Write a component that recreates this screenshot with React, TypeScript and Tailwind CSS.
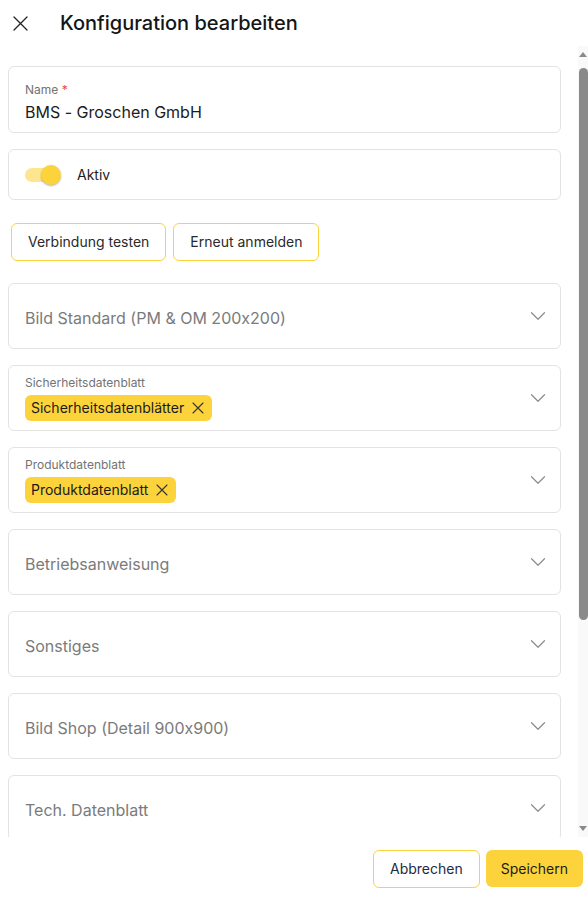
import { ChevronDown } from "lucide-react";

const yellow = "bg-[#fdd33b]";

type Field = {
  label: string;
  chips?: string[];
};

const fields: Field[] = [
  { label: "Bild Standard (PM & OM 200x200)" },
  { label: "Sicherheitsdatenblatt", chips: ["Sicherheitsdatenblätter"] },
  { label: "Produktdatenblatt", chips: ["Produktdatenblatt"] },
  { label: "Betriebsanweisung" },
  { label: "Sonstiges" },
  { label: "Bild Shop (Detail 900x900)" },
  { label: "Tech. Datenblatt" },
  { label: "Zertifikate" },
  { label: "Bild Shop (Liste 300x300)" },
  { label: "Videos" },
];

function Cross({ size, stroke = 1.4 }: { size: number; stroke?: number }) {
  return (
    <svg width={size} height={size} viewBox={`0 0 ${size} ${size}`} fill="none" stroke="currentColor" strokeWidth={stroke} strokeLinecap="round">
      <path d={`M1 1L${size - 1} ${size - 1}M${size - 1} 1L1 ${size - 1}`} />
    </svg>
  );
}

function SelectField({ field }: { field: Field }) {
  const hasValue = field.chips && field.chips.length > 0;
  return (
    <div className="flex h-[66px] items-center rounded-md border border-[#e3e3e3] bg-white pl-4 pr-[9px]">
      <div className="flex-1">
        {hasValue ? (
          <div>
            <p className="text-xs leading-4 text-[#737373]">{field.label}</p>
            <div className="mt-1 flex gap-1">
              {field.chips!.map((c) => (
                <span
                  key={c}
                  className={`flex h-[26px] items-center gap-2 rounded-md ${yellow} pl-1.5 pr-2 text-sm text-[#1b1b1b]`}
                >
                  {c}
                  <span className="text-[#333]">
                    <Cross size={12} stroke={1.1} />
                  </span>
                </span>
              ))}
            </div>
          </div>
        ) : (
          <p className="pt-1 text-base text-[#7b7b7b]">{field.label}</p>
        )}
      </div>
      <ChevronDown size={26} strokeWidth={1.1} className="text-[#8c8c8c]" />
    </div>
  );
}

// page-level scrollbar track with arrows and thumb
function ScrollTrack() {
  return (
    <div className="flex w-[10px] shrink-0 flex-col items-center bg-[#f9f9f9] pb-[6px] pt-[6px]">
      <div className="h-0 w-0 border-x-[4px] border-b-[5px] border-x-transparent border-b-[#8a8a8a]" />
      <div className="ml-px mt-[11px] h-[552px] w-[9px] rounded-t-full rounded-b-full bg-[#8a8a8a]" />
      <div className="flex-1" />
      <div className="h-0 w-0 border-x-[4px] border-t-[5px] border-x-transparent border-t-[#8a8a8a]" />
    </div>
  );
}

export default function App() {
  return (
    <div
      className="flex h-[897px] w-[588px] flex-col bg-white text-[#1c1c1c] [font-feature-settings:'calt'_0]"
      style={{ fontFamily: "Inter, 'Noto Sans', sans-serif" }}
    >
      {/* header */}
      <div className="flex h-[46px] shrink-0 items-center gap-[32px] pl-[13px]">
        <span className="text-[#222]">
          <Cross size={15} stroke={1.3} />
        </span>
        <h1 className="text-xl font-medium text-[#151515]">Konfiguration bearbeiten</h1>
      </div>

      <div className="flex min-h-0 flex-1">
        {/* scrollable form */}
        <div className="min-h-0 flex-1 overflow-y-auto pl-2 pr-[17px] pt-5 pb-4 [scrollbar-width:none]">
          <div className="flex flex-col gap-4">
            <div className="flex h-[67px] flex-col justify-center rounded-md border border-[#e3e3e3] px-4 pt-[6px]">
              <p className="text-xs leading-4 text-[#737373]">
                Name <span className="text-[#e5484d]">*</span>
              </p>
              <p className="mt-0.5 text-base">BMS - Groschen GmbH</p>
            </div>

            <div className="flex h-[51px] items-center gap-4 rounded-md border border-[#e3e3e3] px-4">
              <div className="relative h-5 w-9">
                <div className="absolute left-0 top-[3px] h-[14px] w-[28px] rounded-full bg-[#fde68f]" />
                <div className={`absolute right-0 top-0 h-5 w-5 rounded-full ${yellow} shadow-[0_1px_2px_rgba(0,0,0,0.3)]`} />
              </div>
              <span className="text-sm">Aktiv</span>
            </div>

            <div className="mb-1.5 mt-[7px] flex gap-[7px] pl-[3px]">
              <button className="h-[38px] rounded-md border border-[#fdd33b] px-4 text-sm text-[#2a2a2a]">
                Verbindung testen
              </button>
              <button className="h-[38px] rounded-md border border-[#fdd33b] px-4 text-sm text-[#2a2a2a]">
                Erneut anmelden
              </button>
            </div>

            {fields.map((f) => (
              <SelectField key={f.label} field={f} />
            ))}
          </div>
        </div>
        <ScrollTrack />
      </div>

      {/* footer actions */}
      <div className="flex h-[60px] shrink-0 items-start justify-end gap-1.5 pr-[5px] pt-[13px]">
        <button className="h-[38px] rounded-md border border-[#fdd33b] px-4 text-sm text-[#1f2a44]">
          Abbrechen
        </button>
        <button className={`h-[37px] rounded-md ${yellow} px-[15px] text-sm text-[#1b1b1b]`}>
          Speichern
        </button>
      </div>
    </div>
  );
}
